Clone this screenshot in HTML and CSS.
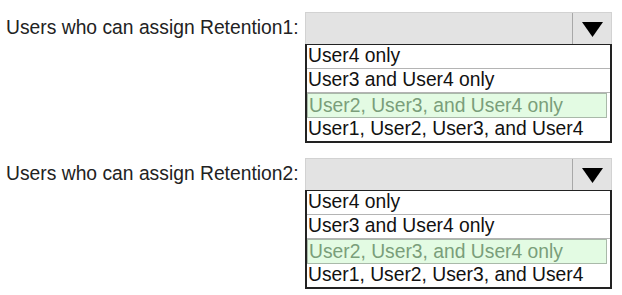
FILE: index.html
```html
<!DOCTYPE html>
<html lang="en">
<head>
<meta charset="utf-8">
<title>Retention assignment</title>
<link rel="stylesheet" href="styles.css">
</head>
<body>
<div class="page">
  <div class="question">
    <div class="label">Users who can assign Retention1:</div>
    <div class="dropdown">
      <div class="header">
        <div class="arrow-btn">
          <svg width="21" height="15" viewBox="0 0 21 15"><polygon points="0,0 21,0 10.5,15" fill="#000"/></svg>
        </div>
      </div>
      <div class="list">
        <div class="option">User4 only</div>
        <div class="option">User3 and User4 only</div>
        <div class="option sel">User2, User3, and User4 only</div>
        <div class="option">User1, User2, User3, and User4</div>
      </div>
    </div>
  </div>
  <div class="question second">
    <div class="label">Users who can assign Retention2:</div>
    <div class="dropdown">
      <div class="header">
        <div class="arrow-btn">
          <svg width="21" height="15" viewBox="0 0 21 15"><polygon points="0,0 21,0 10.5,15" fill="#000"/></svg>
        </div>
      </div>
      <div class="list">
        <div class="option">User4 only</div>
        <div class="option">User3 and User4 only</div>
        <div class="option sel">User2, User3, and User4 only</div>
        <div class="option">User1, User2, User3, and User4</div>
      </div>
    </div>
  </div>
</div>
</body>
</html>
```
FILE: styles.css
```css
html, body {
  margin: 0;
  padding: 0;
  background: #fff;
}
.page {
  padding-top: 12px;
  font-family: "Liberation Sans", Arial, sans-serif;
  font-size: 19.3px;
  color: #1a1a1a;
}
.question {
  display: flex;
  align-items: flex-start;
}
.question.second {
  margin-top: 15px;
}
.label {
  width: 299px;
  padding-left: 6px;
  line-height: 31px;
  white-space: nowrap;
  color: #222;
}
.dropdown {
  width: 307px;
}
.header {
  height: 31px;
  background: #e3e3e3;
  border: 1px solid #d2d2d2;
  border-bottom: none;
  display: flex;
  justify-content: flex-end;
}
.arrow-btn {
  width: 39px;
  border-left: 1px solid #a8a8a8;
  display: flex;
  align-items: center;
  justify-content: center;
  padding-top: 2px;
  box-sizing: border-box;
}
.list {
  border: 2px solid #222;
  border-top-width: 1px;
  background: #fff;
}
.option {
  box-sizing: border-box;
  height: 24px;
  line-height: 22px;
  padding-left: 1px;
  border-bottom: 1px solid #b4b4b4;
  white-space: nowrap;
  color: #111;
}
.option:last-child {
  border-bottom: none;
  height: 23px;
}
.option.sel {
  background: #e3fbe3;
  color: #7a9e7a;
  border: 1px solid #a9b9a9;
  margin-right: 3px;
  height: 25px;
  line-height: 23px;
}
```
